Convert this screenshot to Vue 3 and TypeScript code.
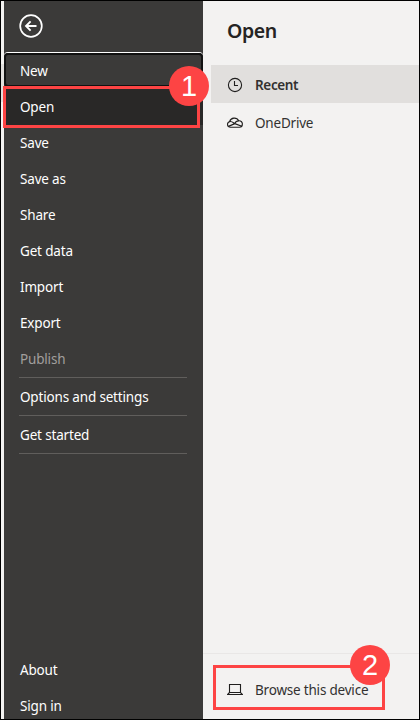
<script setup lang="ts">
interface MenuItem {
  label: string
  state?: 'focused' | 'active' | 'disabled'
  divider?: boolean
}

const menu: MenuItem[] = [
  { label: 'New', state: 'focused' },
  { label: 'Open', state: 'active' },
  { label: 'Save' },
  { label: 'Save as' },
  { label: 'Share' },
  { label: 'Get data' },
  { label: 'Import' },
  { label: 'Export' },
  { label: 'Publish', state: 'disabled', divider: true },
  { label: 'Options and settings', divider: true },
  { label: 'Get started', divider: true },
]

const footer: string[] = ['About', 'Sign in']
</script>

<template>
  <div class="window">
    <div class="edge"></div>
    <nav class="sidebar">
      <button class="back" aria-label="Back">
        <svg width="24" height="24" viewBox="0 0 24 24" fill="none" stroke="#fff">
          <circle cx="12" cy="12" r="10.8" stroke-width="1.7" />
          <path d="M17.5 12H7.2M11.6 7.4L7 12l4.6 4.6" stroke-width="1.9" />
        </svg>
      </button>
      <div class="menu">
        <div v-for="item in menu" :key="item.label" class="entry" :class="{ divided: item.divider }">
          <div class="item" :class="item.state"><span>{{ item.label }}</span></div>
        </div>
      </div>
      <div class="footer">
        <div v-for="label in footer" :key="label" class="item"><span>{{ label }}</span></div>
      </div>
    </nav>

    <main class="panel">
      <h1>Open</h1>
      <div class="source selected">
        <svg class="icon" width="16" height="16" viewBox="0 0 16 16" fill="none" stroke="#201f1e">
          <circle cx="8" cy="8" r="6.6" stroke-width="1.1" />
          <path d="M7.5 4v4.5H11" stroke-width="1.1" />
        </svg>
        <span class="recent">Recent</span>
      </div>
      <div class="source">
        <svg class="icon" width="16" height="16" viewBox="0 0 16 16" fill="none" stroke="#201f1e" stroke-width="1.15" stroke-linejoin="round">
          <path d="M3.5 12.2C-.3 12.2-.3 7.4 2.6 6.6C3.8 2.4 9.7 1.8 11.7 5.8C14 5.6 15.7 7.3 15.3 9.5C15.3 11.5 14 12.2 12.5 12.2Z" />
          <path d="M2.6 6.6C5 6.2 6 7.4 7.8 8.6L14.8 11.3M1.5 11.4L7.8 8.6C8.4 7 9.7 5.8 11.7 5.8" />
        </svg>
        <span class="onedrive">OneDrive</span>
      </div>
      <div class="browse">
        <svg class="icon" width="16" height="16" viewBox="0 0 16 16" fill="none" stroke="#201f1e" stroke-width="1.1">
          <path d="M2.5 10.5v-8h11v8M2.5 10.5L.6 12.5h14.8l-1.9-2z" />
        </svg>
        <span class="device">Browse this device</span>
      </div>
    </main>

    <div class="callout first"></div>
    <div class="badge one">1</div>
    <div class="callout second"></div>
    <div class="badge two">2</div>
  </div>
</template>

<style>
body {
  margin: 0;
  overflow: hidden;
}
</style>

<style scoped>
.window {
  box-sizing: border-box;
  position: relative;
  display: flex;
  width: 420px;
  height: 720px;
  overflow: hidden;
  border: 1px solid #000;
  background: #f3f2f1;
  font: 14px/20px "Noto Sans", "Open Sans", sans-serif;
}
.edge {
  width: 3px;
  height: 38px;
  margin-top: 63px;
  background: #e1dfdd;
}
.sidebar {
  display: flex;
  flex-direction: column;
  width: 199px;
  background: #3b3a39;
  color: #fff;
}
.back {
  display: flex;
  width: 24px;
  height: 24px;
  margin: 13px 0 15px 15px;
  padding: 0;
  border: 0;
  background: none;
}
.menu {
  flex: 1;
}
.item {
  box-sizing: border-box;
  display: flex;
  align-items: center;
  height: 36px;
  padding-left: 16px;
  font-size: 13.5px;
  letter-spacing: -0.17px;
  white-space: nowrap;
}
.focused {
  height: 34px;
  margin-bottom: 2px;
  padding: 2px 0 0 14px;
  border: 2px solid #111;
  border-radius: 4px;
  box-shadow: 0 -1px #fff;
}
.active {
  background: #292827;
}
.disabled {
  color: #a19f9d;
}
.divided::after {
  content: "";
  display: block;
  height: 1px;
  margin: 0 16px 1px 15px;
  background: #605e5c;
}
.footer {
  height: 67px;
  overflow: hidden;
}
.panel {
  display: flex;
  flex: 1;
  flex-direction: column;
  color: #323130;
}
h1 {
  margin: 16px 0 20px 24px;
  color: #252423;
  font-size: 19.5px;
  font-weight: 600;
  letter-spacing: -0.4px;
  line-height: 28px;
}
.source {
  box-sizing: border-box;
  display: flex;
  align-items: center;
  height: 38px;
  margin-left: 8px;
  padding: 2px 0 0 16px;
}
.selected {
  background: #e1dfdd;
}
.icon {
  flex: none;
  margin-right: 12px;
}
.source span,
.browse span {
  font-size: 13.5px;
  letter-spacing: -0.2px;
  white-space: nowrap;
}
.source .recent {
  font-weight: 600;
  letter-spacing: -0.35px;
}
.browse {
  box-sizing: border-box;
  display: flex;
  align-items: center;
  height: 66px;
  margin-top: auto;
  padding: 6px 0 0 24px;
  border-top: 1px solid #e9e7e6;
}
.callout {
  position: absolute;
  box-sizing: border-box;
  border: 3px solid #fd4444;
}
.first {
  left: 2px;
  top: 85px;
  width: 197px;
  height: 42px;
}
.second {
  left: 212px;
  top: 664px;
  width: 172px;
  height: 45px;
}
.badge {
  position: absolute;
  width: 40px;
  height: 40px;
  border-radius: 50%;
  background: #fd4444;
  color: #fff;
  font: 29px/41px "Liberation Sans", Arial, sans-serif;
  text-align: center;
}
.one {
  left: 168px;
  top: 65px;
}
.two {
  left: 349px;
  top: 644px;
}
</style>
